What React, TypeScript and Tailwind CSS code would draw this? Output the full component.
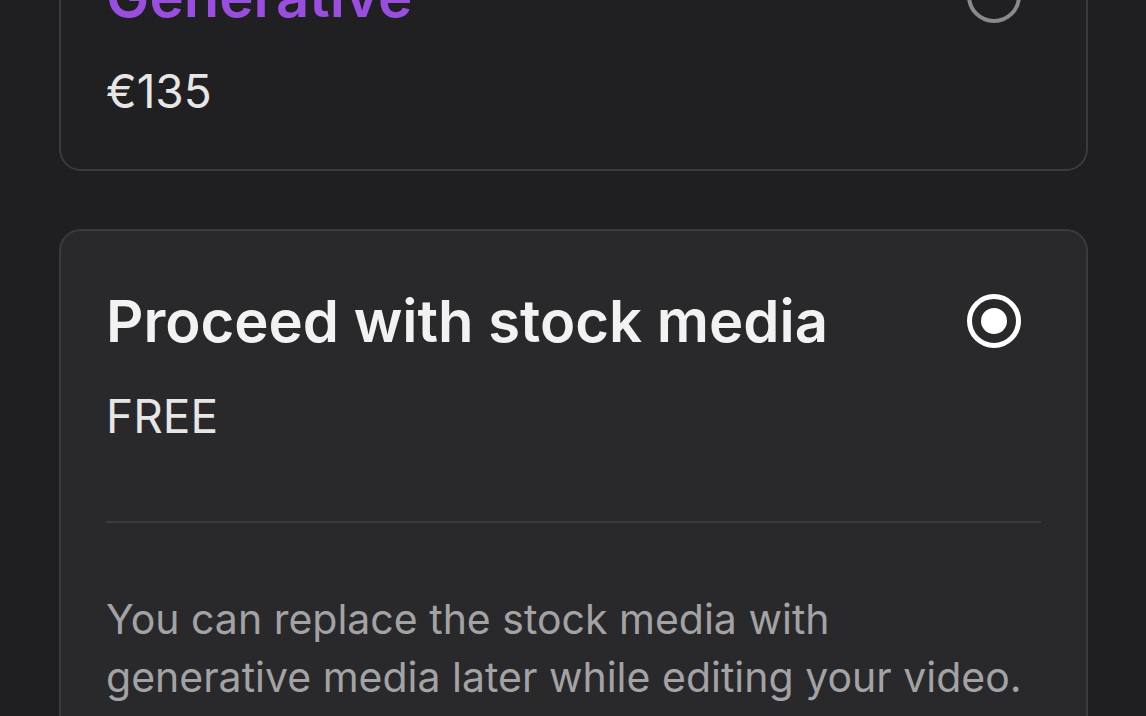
import React from 'react';

type Option = {
    title: string;
    price: string;
    selected: boolean;
    accent?: boolean;
    note?: string;
};

const options: Option[] = [
    { title: 'Generative', price: '€135', selected: false, accent: true },
    {
        title: 'Proceed with stock media',
        price: 'FREE',
        selected: true,
        note: 'You can replace the stock media with generative media later while editing your video.',
    },
];

function Radio({ checked }: { checked: boolean }) {
    if (checked) {
        return (
            <div className="mr-[20px] flex h-[54px] w-[54px] shrink-0 items-center justify-center rounded-full border-[5px] border-white">
                <div className="h-[26px] w-[26px] rounded-full bg-white" />
            </div>
        );
    }
    return <div className="mr-[20px] h-[54px] w-[54px] shrink-0 rounded-full border-[4px] border-[#8a8a8c]" />;
}

export default function App() {
    return (
        <div
            className="h-[716px] w-full overflow-hidden bg-[#1f1f21] pl-[59px] pr-[58px]"
            style={{ fontFamily: 'Inter, "Noto Sans", sans-serif' }}
        >
            <div className="-mt-[96px] flex flex-col gap-[58px]">
                {options.map((o) => (
                    <div
                        key={o.title}
                        className={`rounded-[22px] border-2 border-[#3b3b3d] px-[45px] pt-[54px] pb-[50px] ${
                            o.selected ? 'bg-[#29292b]' : 'bg-[#202022]'
                        }`}
                    >
                        <div className="flex items-center justify-between">
                            <h2
                                className={`text-[58px] leading-[72px] font-semibold ${
                                    o.accent ? 'text-[#9a4ee0]' : 'text-[#f2f2f2]'
                                }`}
                            >
                                {o.title}
                            </h2>
                            <Radio checked={o.selected} />
                        </div>
                        <p className="mt-[31px] text-[46px] leading-[56px] text-[#e6e6e6]">{o.price}</p>

                        {o.note && (
                            <>
                                <div className="mt-[77px] h-[2px] bg-[#3a3a3c]" />
                                <p className="mt-[67px] text-[41px] leading-[58px] text-[#a3a3a5]">{o.note}</p>
                            </>
                        )}
                    </div>
                ))}
            </div>
        </div>
    );
}
